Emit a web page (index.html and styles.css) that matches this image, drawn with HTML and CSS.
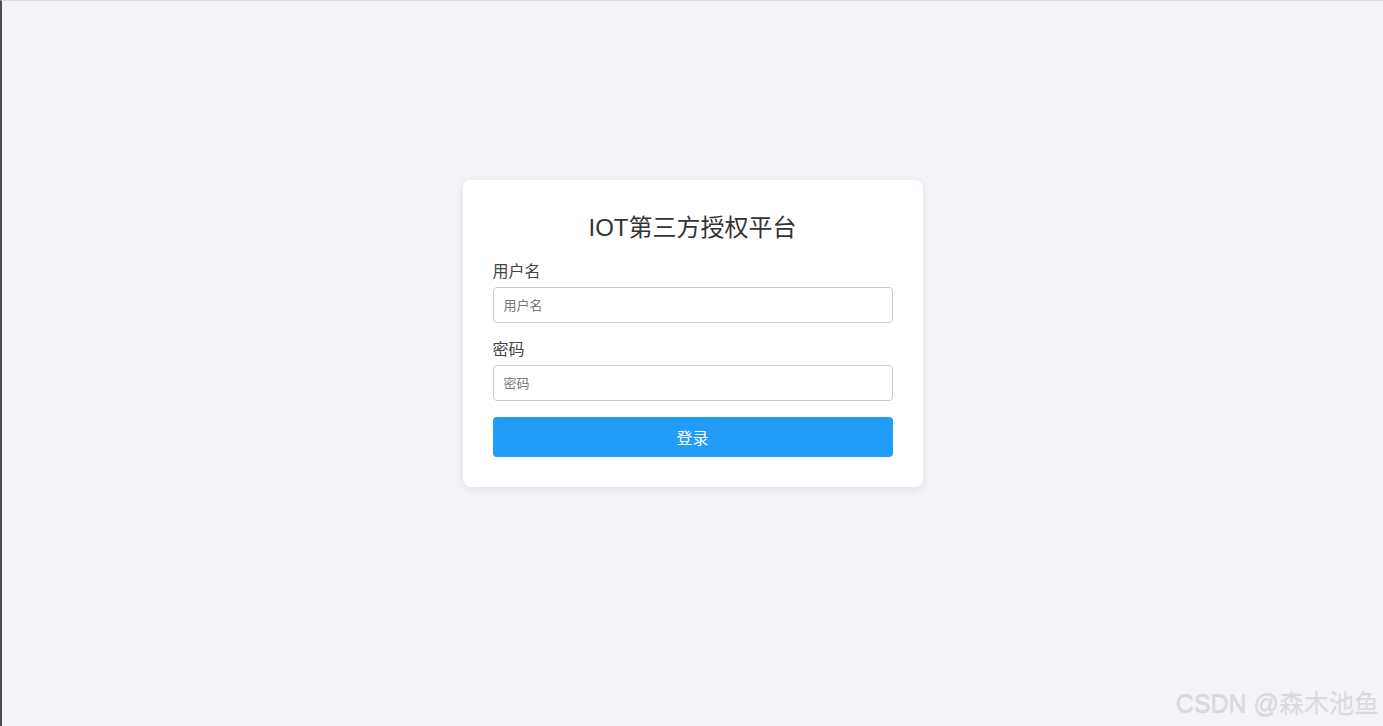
FILE: index.html
```html
<!DOCTYPE html>
<html lang="zh-CN">
<head>
<meta charset="utf-8">
<title>IOT第三方授权平台</title>
<link rel="stylesheet" href="styles.css">
</head>
<body>
<main class="page">
  <form class="card" onsubmit="return false;">
    <h2 class="title">IOT第三方授权平台</h2>
    <div class="group">
      <label class="label" for="username">用户名</label>
      <input class="input" id="username" type="text" placeholder="用户名">
    </div>
    <div class="group">
      <label class="label" for="password">密码</label>
      <input class="input" id="password" type="password" placeholder="密码">
    </div>
    <button class="btn" type="submit">登录</button>
  </form>
</main>
<div class="watermark">CSDN @森木池鱼</div>
</body>
</html>
```
FILE: styles.css
```css
* { box-sizing: border-box; }

html, body {
  margin: 0;
  height: 100%;
}

body {
  background: #f4f4f8;
  border-top: 1px solid #dcdcdf;
  border-left: 2px solid #4d4d57;
  font-family: "Liberation Sans", "Noto Sans CJK SC", sans-serif;
  color: #333;
  position: relative;
  overflow: hidden;
}

.page {
  display: flex;
  justify-content: center;
  padding-top: 179px;
}

.card {
  width: 460px;
  background: #fff;
  border-radius: 8px;
  box-shadow: 0 2px 10px rgba(0, 0, 0, 0.09);
  padding: 30px 30px 30px;
  display: flex;
  flex-direction: column;
}

.title {
  margin: 0 0 16px;
  font-size: 24px;
  font-weight: 400;
  line-height: 36px;
  text-align: center;
  color: #333;
}

.group {
  display: flex;
  flex-direction: column;
  margin-bottom: 17px;
}

.group:last-of-type {
  margin-bottom: 16px;
}

.label {
  font-size: 16px;
  line-height: 20px;
  color: #444;
  margin-bottom: 5px;
}

.input {
  height: 36px;
  width: 100%;
  border: 1px solid #cccccc;
  border-radius: 4px;
  padding: 0 10px;
  font-family: inherit;
  font-size: 13px;
  color: #333;
  background: #fff;
  outline: none;
}

.input::placeholder {
  color: #777;
}

.btn {
  height: 40px;
  width: 100%;
  border: none;
  border-radius: 4px;
  background: #219cf8;
  color: #fff;
  font-family: inherit;
  font-size: 16px;
  cursor: pointer;
}

.watermark {
  position: absolute;
  right: 4px;
  bottom: 8px;
  font-size: 25px;
  font-weight: 300;
  line-height: 30px;
  color: #dadadc;
  text-shadow: 0 1px 1px rgba(0, 0, 0, 0.12);
  white-space: nowrap;
}
```
